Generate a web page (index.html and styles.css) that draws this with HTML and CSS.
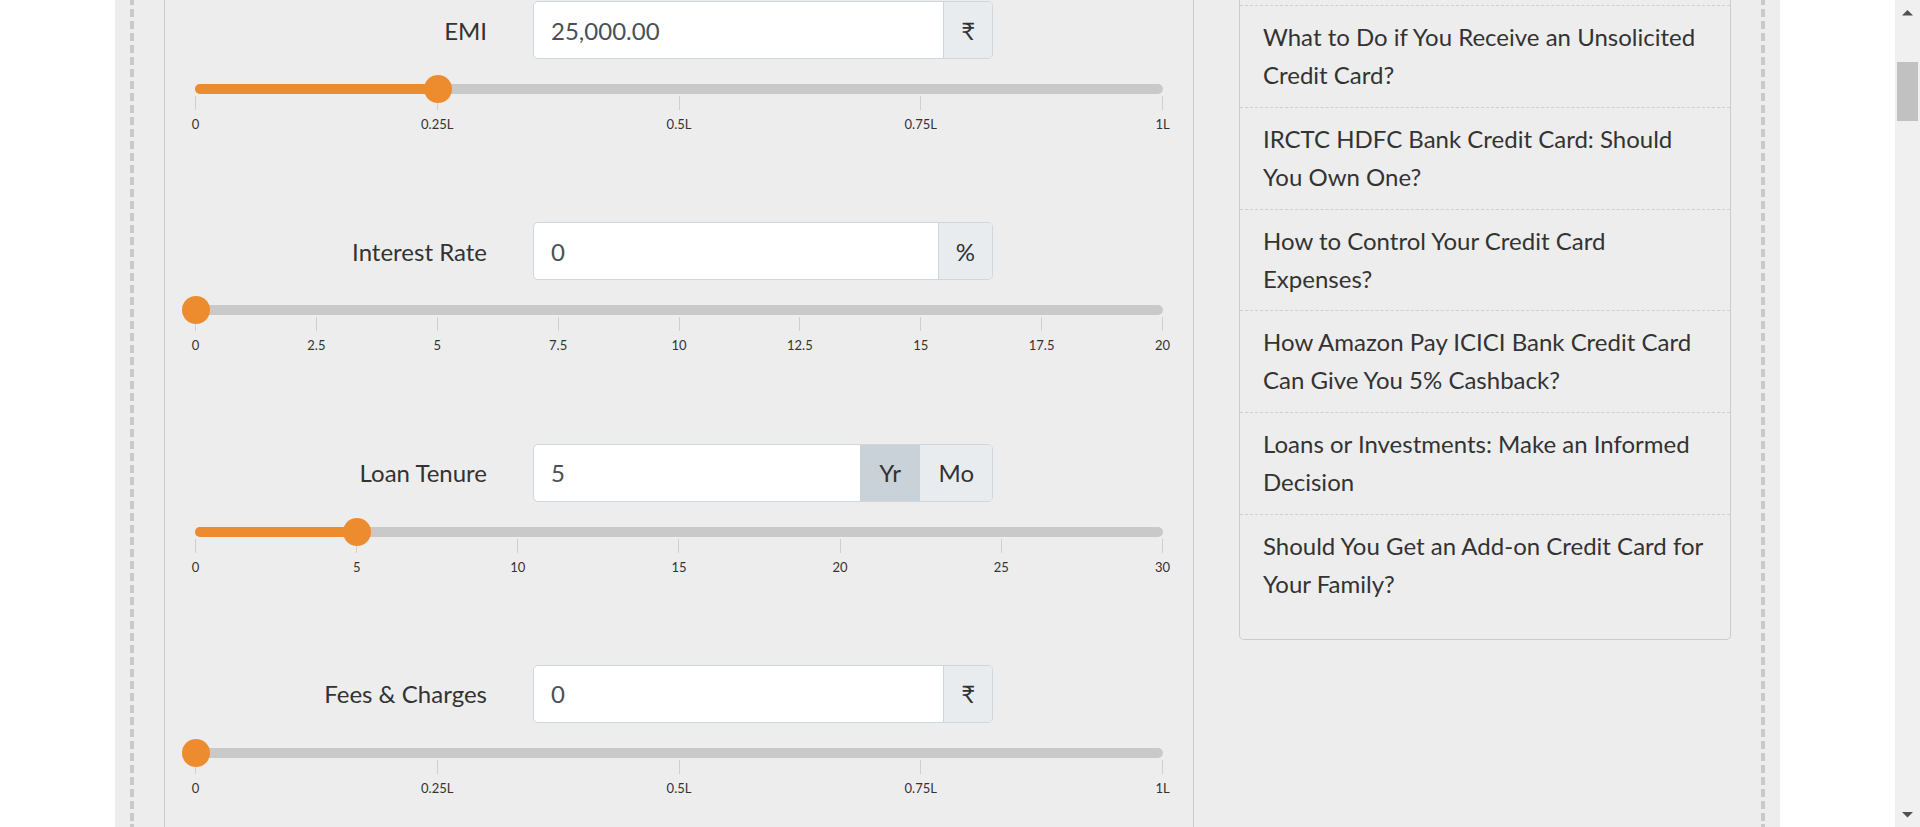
FILE: index.html
```html
<!DOCTYPE html>
<html lang="en">
<head>
<meta charset="utf-8">
<title>EMI Calculator</title>
<link rel="stylesheet" href="styles.css">
</head>
<body>
<div class="screen">
  <div class="page">
    <div class="panel">
      <div class="frame">
        <section class="calc">
          <div class="field">
            <div class="field-head">
              <label class="field-label">EMI</label>
              <div class="input-group">
                <div class="input-value">25,000.00</div>
                <div class="addon">₹</div>
              </div>
            </div>
            <div class="track">
              <div class="fill" style="width:25%"></div>
              <span class="thumb" style="left:25%"></span>
            </div>
            <div class="scale">
              <div class="tick"><i></i><span>0</span></div>
              <div class="tick"><i></i><span>0.25L</span></div>
              <div class="tick"><i></i><span>0.5L</span></div>
              <div class="tick"><i></i><span>0.75L</span></div>
              <div class="tick"><i></i><span>1L</span></div>
            </div>
          </div>

          <div class="field">
            <div class="field-head">
              <label class="field-label">Interest Rate</label>
              <div class="input-group">
                <div class="input-value">0</div>
                <div class="addon">%</div>
              </div>
            </div>
            <div class="track">
              <div class="fill" style="width:0%"></div>
              <span class="thumb" style="left:0%"></span>
            </div>
            <div class="scale">
              <div class="tick"><i></i><span>0</span></div>
              <div class="tick"><i></i><span>2.5</span></div>
              <div class="tick"><i></i><span>5</span></div>
              <div class="tick"><i></i><span>7.5</span></div>
              <div class="tick"><i></i><span>10</span></div>
              <div class="tick"><i></i><span>12.5</span></div>
              <div class="tick"><i></i><span>15</span></div>
              <div class="tick"><i></i><span>17.5</span></div>
              <div class="tick"><i></i><span>20</span></div>
            </div>
          </div>

          <div class="field">
            <div class="field-head">
              <label class="field-label">Loan Tenure</label>
              <div class="input-group">
                <div class="input-value">5</div>
                <div class="addon addon-btn active">Yr</div>
                <div class="addon addon-btn">Mo</div>
              </div>
            </div>
            <div class="track">
              <div class="fill" style="width:16.667%"></div>
              <span class="thumb" style="left:16.667%"></span>
            </div>
            <div class="scale">
              <div class="tick"><i></i><span>0</span></div>
              <div class="tick"><i></i><span>5</span></div>
              <div class="tick"><i></i><span>10</span></div>
              <div class="tick"><i></i><span>15</span></div>
              <div class="tick"><i></i><span>20</span></div>
              <div class="tick"><i></i><span>25</span></div>
              <div class="tick"><i></i><span>30</span></div>
            </div>
          </div>

          <div class="field">
            <div class="field-head">
              <label class="field-label">Fees &amp; Charges</label>
              <div class="input-group">
                <div class="input-value">0</div>
                <div class="addon">₹</div>
              </div>
            </div>
            <div class="track">
              <div class="fill" style="width:0%"></div>
              <span class="thumb" style="left:0%"></span>
            </div>
            <div class="scale">
              <div class="tick"><i></i><span>0</span></div>
              <div class="tick"><i></i><span>0.25L</span></div>
              <div class="tick"><i></i><span>0.5L</span></div>
              <div class="tick"><i></i><span>0.75L</span></div>
              <div class="tick"><i></i><span>1L</span></div>
            </div>
          </div>
        </section>

        <aside class="sidebar">
          <ul class="article-list">
            <li><a>What to Do if You Receive an Unsolicited Credit Card?</a></li>
            <li><a>IRCTC HDFC Bank Credit Card: Should You Own One?</a></li>
            <li><a>How to Control Your Credit Card Expenses?</a></li>
            <li><a>How Amazon Pay ICICI Bank Credit Card Can Give You 5% Cashback?</a></li>
            <li><a>Loans or Investments: Make an Informed Decision</a></li>
            <li><a>Should You Get an Add-on Credit Card for Your Family?</a></li>
          </ul>
        </aside>
      </div>
    </div>
  </div>
  <div class="scrollbar">
    <svg class="sb-arrow" width="25" height="26" viewBox="0 0 25 26"><path d="M7 15.5 L12.5 10 L18 15.5 Z" fill="#505050"/></svg>
    <div class="sb-track"><div class="sb-thumb"></div></div>
    <svg class="sb-arrow" width="25" height="26" viewBox="0 0 25 26"><path d="M7 11 L12.5 16.5 L18 11 Z" fill="#505050"/></svg>
  </div>
</div>
</body>
</html>
```

FILE: styles.css
```css
* { box-sizing: border-box; }

html, body {
  margin: 0;
  padding: 0;
  height: 827px;
  overflow: hidden;
  background: #fff;
  font-family: Lato, "Noto Sans", "Liberation Sans", sans-serif;
  color: #333;
}

.screen {
  display: flex;
  height: 827px;
}

.page {
  flex: 1;
  min-width: 0;
  background: #fff;
  overflow: hidden;
}

.panel {
  width: 1665px;
  height: 100%;
  margin: 0 auto;
  background: #ededed;
  padding: 0 15px;
}

.frame {
  height: 100%;
  display: flex;
  align-items: stretch;
  padding: 0 34px;
  background-image:
    repeating-linear-gradient(to bottom, #c9c9c9 0 8px, transparent 8px 12px),
    repeating-linear-gradient(to bottom, #c9c9c9 0 8px, transparent 8px 12px);
  background-size: 4px 100%, 4px 100%;
  background-position: left -3px, right -3px;
  background-repeat: repeat-y, repeat-y;
}

/* ---------- calculator column ---------- */
.calc {
  width: 1030px;
  flex-shrink: 0;
  border-left: 1px solid #cbcbcb;
  border-right: 1px solid #cbcbcb;
  padding: 1px 30px 0;
}

.field {
  margin-bottom: 89.33px;
}

.field-head {
  display: flex;
  align-items: center;
  height: 58px;
}

.field-label {
  width: 292px;
  margin-right: 46px;
  text-align: right;
  font-size: 24px;
  color: #333;
}

.input-group {
  width: 460px;
  height: 58px;
  display: flex;
  border: 1px solid #cfd6dc;
  border-radius: 5px;
  background: #fff;
  overflow: hidden;
}

.input-value {
  flex: 1;
  display: flex;
  align-items: center;
  padding-left: 17px;
  font-size: 24px;
  color: #495057;
}

.addon {
  display: flex;
  align-items: center;
  justify-content: center;
  padding: 0 17px;
  background: #e9ecef;
  border-left: 1px solid #cfd6dc;
  font-size: 24px;
  color: #333;
}

.addon-btn {
  border-left: none;
  padding: 0 18px;
}

.addon-btn.active {
  background: #c9d1d9;
  padding: 0 19.5px;
}

.track {
  position: relative;
  height: 10px;
  margin-top: 25px;
  border-radius: 5px;
  background: #c9c9c9;
}

.fill {
  height: 100%;
  border-radius: 5px 0 0 5px;
  background: #ed8c2e;
}

.thumb {
  position: absolute;
  top: 50%;
  width: 28px;
  height: 28px;
  border-radius: 50%;
  background: #ed8c2e;
  transform: translate(-50%, -50%);
  margin-left: 1px;
}

.scale {
  display: flex;
  justify-content: space-between;
  margin-top: 2px;
}

.tick {
  width: 1px;
  display: flex;
  flex-direction: column;
  align-items: center;
}

.tick i {
  display: block;
  width: 1px;
  height: 14px;
  background: #cfcfcf;
}

.tick span {
  display: block;
  margin-top: 6px;
  font-size: 13px;
  line-height: 17px;
  white-space: nowrap;
  color: #333;
}

/* ---------- sidebar ---------- */
.sidebar {
  width: 492px;
  flex-shrink: 0;
  margin-left: 45px;
}

.article-list {
  list-style: none;
  margin: 0;
  padding: 5px 0 23px;
  border: 1px solid #cbcbcb;
  border-top: none;
  border-radius: 0 0 5px 5px;
}

.article-list li {
  border-top: 1px dashed #cfcfcf;
  padding: 12px 23px 12.8px;
}

.article-list a {
  display: block;
  font-size: 24px;
  line-height: 38px;
  color: #333;
}

/* ---------- scrollbar ---------- */
.scrollbar {
  width: 25px;
  flex-shrink: 0;
  height: 827px;
  display: flex;
  flex-direction: column;
  background: #f0f0f0;
}

.sb-arrow {
  display: block;
  flex-shrink: 0;
}

.sb-track {
  flex: 1;
  padding: 36px 2px 0;
}

.sb-thumb {
  width: 21px;
  height: 59px;
  background: #c1c1c1;
}
```
